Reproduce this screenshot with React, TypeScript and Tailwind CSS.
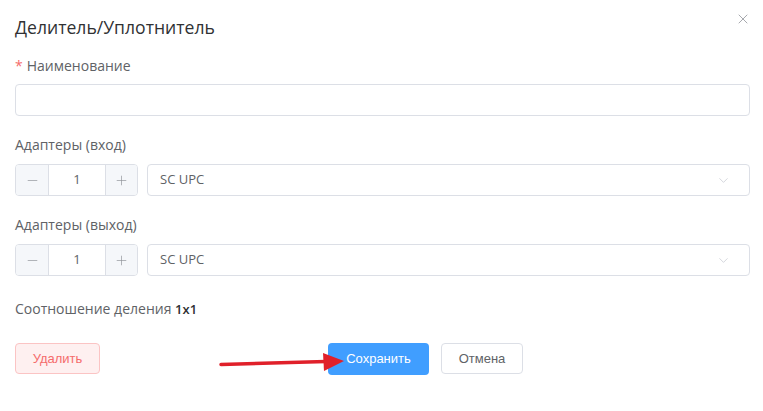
import { ChevronDown, Minus, Plus, X } from "lucide-react";

const FONT = "font-['Open_Sans',sans-serif]";

function Stepper({ value }: { value: number }) {
  return (
    <div className="flex h-[32px] w-[123px] shrink-0 rounded border border-[#dcdfe6] overflow-hidden">
      <div className="flex w-[33px] items-center justify-center bg-[#f5f7fa] border-r border-[#dcdfe6] text-[#909399]">
        <Minus className="w-[15px] h-[15px]" strokeWidth={1.1} />
      </div>
      <div className="flex flex-1 items-center justify-center text-[13px] text-[#606266]">
        {value}
      </div>
      <div className="flex w-[32px] items-center justify-center bg-[#f5f7fa] border-l border-[#dcdfe6] text-[#909399]">
        <Plus className="w-[15px] h-[15px]" strokeWidth={1.1} />
      </div>
    </div>
  );
}

function SelectBox({ value }: { value: string }) {
  return (
    <div className="flex h-[32px] flex-1 items-center justify-between rounded border border-[#dcdfe6] pl-[12px] pr-[18px]">
      <span className="text-[13px] text-[#606266]">{value}</span>
      <ChevronDown className="w-[15px] h-[15px] text-[#c0c4cc]" strokeWidth={1.1} />
    </div>
  );
}

export default function App() {
  return (
    <main className={`relative min-h-screen w-[763px] bg-white ${FONT}`}>
      <button className="absolute right-[12px] top-[11px] text-[#909399]">
        <X className="w-[16px] h-[16px]" strokeWidth={1.2} />
      </button>

      <div className="px-[15px] pt-[15px]">
        <h1 className="text-[17.6px] leading-[24px] text-[#303133]">
          Делитель/Уплотнитель
        </h1>

        <label className="mt-[18px] block text-[14px] leading-[18px] text-[#606266]">
          <span className="text-[#f56c6c] mr-[4px]">*</span>Наименование
        </label>
        <div className="mt-[9px] h-[32px] w-[735px] rounded border border-[#dcdfe6]" />

        <p className="mt-[20px] text-[14px] leading-[18px] text-[#606266]">
          Адаптеры (вход)
        </p>
        <div className="mt-[10px] flex w-[735px] gap-[9px]">
          <Stepper value={1} />
          <SelectBox value="SC UPC" />
        </div>

        <p className="mt-[20px] text-[14px] leading-[18px] text-[#606266]">
          Адаптеры (выход)
        </p>
        <div className="mt-[10px] flex w-[735px] gap-[9px]">
          <Stepper value={1} />
          <SelectBox value="SC UPC" />
        </div>

        <p className="mt-[24px] text-[14px] leading-[18px] text-[#606266]">
          Соотношение деления{" "}
          <b className="text-[13px] font-semibold text-[#303133]">1x1</b>
        </p>

        <div className="mt-[25px] flex items-start font-['Liberation_Sans',Arial,sans-serif] text-[13px]">
          <button className="h-[31px] w-[85px] rounded border border-[#fbc4c4] bg-[#fef0f0] text-[#f56c6c]">
            Удалить
          </button>
          <button className="ml-[228px] h-[32px] w-[101px] rounded bg-[#409eff] text-white">
            Сохранить
          </button>
          <button className="ml-[12px] h-[31px] w-[82px] rounded border border-[#dcdfe6] bg-white text-[#606266]">
            Отмена
          </button>
        </div>
      </div>

      {/* annotation arrow */}
      <svg
        className="absolute left-[218px] top-[350px]"
        width="130"
        height="24"
        viewBox="0 0 130 24"
      >
        <line x1="3" y1="14.5" x2="108" y2="11.5" stroke="#e0202a" strokeWidth="3.5" strokeLinecap="round" />
        <polygon points="105,3 126,11 106,21" fill="#e0202a" />
      </svg>
    </main>
  );
}
